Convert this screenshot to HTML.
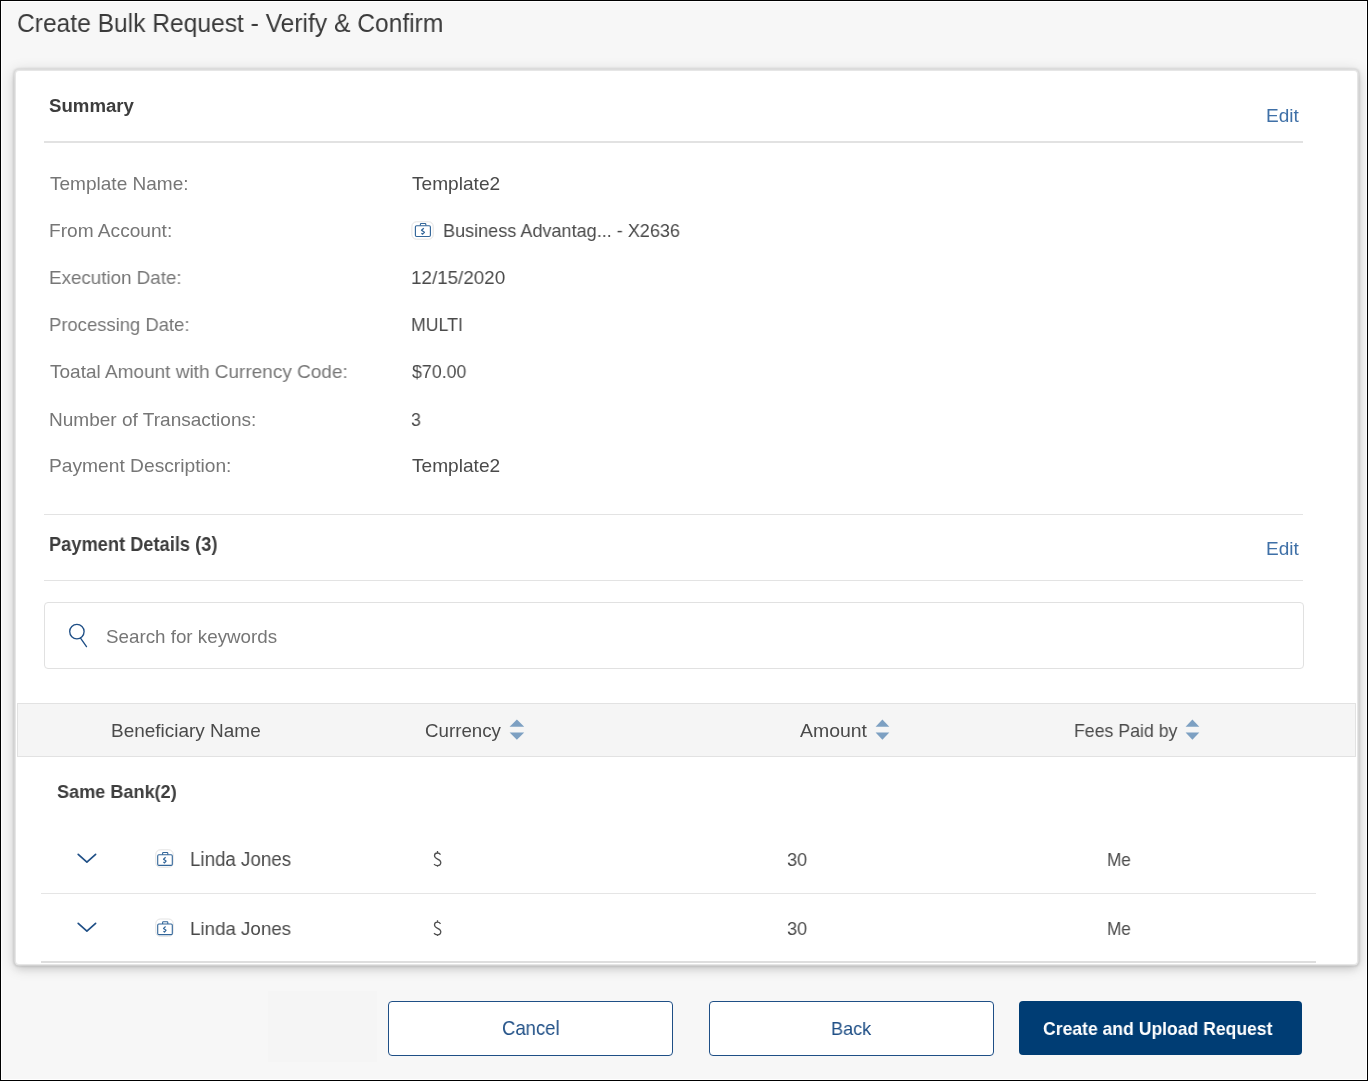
<!DOCTYPE html>
<html><head><meta charset="utf-8"><title>Create Bulk Request - Verify &amp; Confirm</title>
<style>
html,body{margin:0;padding:0}
body{width:1368px;height:1081px;position:relative;overflow:hidden;background:#000;font-family:"Liberation Sans",sans-serif}
.a{position:absolute;box-sizing:border-box}
.t{position:absolute;white-space:nowrap;line-height:1;font-family:"Liberation Sans",sans-serif;transform-origin:0 0;will-change:transform}
#frame{left:1px;top:1px;width:1366px;height:1079px;background:#fff}
#page{left:2px;top:2px;width:1364px;height:1077px;background:#f7f7f7}
#card{left:16px;top:71px;width:1341px;height:893px;background:#fff;border-radius:3px;box-shadow:0 0 0 1.5px #e6e6e6,0 0 2px 2.5px rgba(0,0,0,.09),0 2px 14px 3px rgba(0,0,0,.12),0 4px 8px rgba(0,0,0,.12)}
.hr{position:absolute;background:#e3e3e3}
#search{left:44px;top:602px;width:1260px;height:67px;border:1px solid #e1e1e1;border-radius:4px;background:#fff}
#thead{left:17px;top:703px;width:1339px;height:54px;background:#f5f5f5;border:1px solid #e2e2e2}
.btn{position:absolute;box-sizing:border-box;border-radius:4px}
#bcancel{left:388px;top:1001px;width:285px;height:55px;border:1.5px solid #1f4f86;background:#fff}
#bback{left:709px;top:1001px;width:285px;height:55px;border:1.5px solid #1f4f86;background:#fff}
#bcreate{left:1019px;top:1001px;width:283px;height:54px;background:#003d74}
svg{position:absolute;overflow:visible}
</style></head><body>
<div class="a" id="frame"></div>
<div class="a" id="page"></div>
<div class="a" id="card"></div>
<div class="hr" style="left:44px;top:141px;width:1259px;height:2px;background:#e2e2e2"></div>
<div class="hr" style="left:44px;top:514px;width:1259px;height:1px"></div>
<div class="hr" style="left:44px;top:580px;width:1259px;height:1px"></div>
<div class="a" id="search"></div>
<div class="a" id="thead"></div>
<div class="hr" style="left:41px;top:893px;width:1275px;height:1px;background:#e5e5e5"></div>
<div class="hr" style="left:41px;top:961px;width:1275px;height:2px;background:#dedede"></div>
<div class="a" style="left:268px;top:991px;width:109px;height:71px;background:#f5f5f5"></div>
<div class="btn" id="bcancel"></div>
<div class="btn" id="bback"></div>
<div class="btn" id="bcreate"></div>

<!-- search icon -->
<svg style="left:0;top:0" width="1" height="1"><g fill="none" stroke="#1f4f86" stroke-width="1.35"><circle cx="76.9" cy="631.6" r="7.2"/><line x1="80.7" y1="638.3" x2="86.5" y2="646.6" stroke-linecap="round"/></g></svg>

<!-- summary account icon -->
<svg style="left:0;top:0" width="1" height="1">
<rect x="411.9" y="221.8" width="21.3" height="17.4" rx="4.5" fill="#fff" stroke="#e3e3e3" stroke-width="1"/>
<g fill="none" stroke="#336699" stroke-width="1.15">
<rect x="415.4" y="225.7" width="15" height="10.8" rx="1.2"/>
<path d="M420.4 225.6 V224.2 Q420.4 223.5 421.1 223.5 H425.1 Q425.8 223.5 425.8 224.2 V225.6"/>
<path d="M423.8 228.2 L421.5 230.3 L424.4 232.3 L422.6 234.1 L421.4 233.3" stroke-width="1.3" stroke-linejoin="round"/>
</g></svg>

<!-- sort icons -->
<svg style="left:0;top:0" width="1" height="1"><g fill="#7da0c2">
<path d="M516.9 719.6 L524.2 726.8 H509.6 Z"/><path d="M509.6 732.4 H524.2 L516.9 739.8 Z"/>
<path d="M882.4 719.6 L889.3 726.8 H875.6 Z"/><path d="M875.6 732.4 H889.3 L882.4 739.8 Z"/>
<path d="M1192.4 719.6 L1199.3 726.8 H1185.6 Z"/><path d="M1185.6 732.4 H1199.3 L1192.4 739.8 Z"/>
</g></svg>

<!-- chevrons -->
<svg style="left:0;top:0" width="1" height="1"><g fill="none" stroke="#1f4f86" stroke-width="1.7" stroke-linecap="round" stroke-linejoin="round">
<path d="M78.2 854.4 L86.9 862.2 L95.6 854.4"/>
<path d="M78.2 923.4 L86.9 931.2 L95.6 923.4"/>
</g></svg>

<!-- row icons -->
<svg style="left:0;top:0" width="1" height="1">
<g id="ri1">
<rect x="155.8" y="849.8" width="17.4" height="17.4" rx="4.5" fill="#fff" stroke="#e3e3e3" stroke-width="1"/>
<g fill="none" stroke="#336699" stroke-width="1.1">
<rect x="157.7" y="854.8" width="14.6" height="10.6" rx="1.2"/>
<path d="M162.6 854.7 V853.2 Q162.6 852.5 163.3 852.5 H167.1 Q167.8 852.5 167.8 853.2 V854.7"/>
<path d="M165.6 857.3 L163.5 859.2 L166.1 861.0 L164.5 862.9 L163.4 862.1" stroke-width="1.2" stroke-linejoin="round"/>
</g></g>
<g transform="translate(0,69.2)">
<rect x="155.8" y="849.8" width="17.4" height="17.4" rx="4.5" fill="#fff" stroke="#e3e3e3" stroke-width="1"/>
<g fill="none" stroke="#336699" stroke-width="1.1">
<rect x="157.7" y="854.8" width="14.6" height="10.6" rx="1.2"/>
<path d="M162.6 854.7 V853.2 Q162.6 852.5 163.3 852.5 H167.1 Q167.8 852.5 167.8 853.2 V854.7"/>
<path d="M165.6 857.3 L163.5 859.2 L166.1 861.0 L164.5 862.9 L163.4 862.1" stroke-width="1.2" stroke-linejoin="round"/>
</g></g>
</svg>

<!-- currency glyphs -->
<svg style="left:0;top:0" width="1" height="1"><g fill="none" stroke="#4f4f4f" stroke-width="1.3" stroke-linecap="butt">
<path id="dl" d="M440.5 854.6 C439.8 853.5 438.7 853 437.5 853 C435.7 853 434.5 854.2 434.5 855.8 C434.5 857.5 435.9 858.3 437.6 859.1 C439.4 859.9 440.8 860.8 440.8 862.6 C440.8 864.4 439.4 865.6 437.4 865.6 C436 865.6 434.8 865 434 864.1 M437.5 851.1 V853 M437.5 865.6 V866.8"/>
<use href="#dl" transform="translate(0,69.2)"/>
</g></svg>
<div class="t" id="title" style="left:17.10px;top:10.00px;font-size:26.45px;font-weight:400;color:#3a3a3a;transform:scaleX(0.9298)">Create Bulk Request - Verify &amp; Confirm<span class="bm" style="display:inline-block;width:0;height:0;vertical-align:baseline"></span></div>
<div class="t" id="summary" style="left:49.09px;top:96.81px;font-size:18.46px;font-weight:700;color:#3d3d3d;transform:scaleX(1.0107)">Summary<span class="bm" style="display:inline-block;width:0;height:0;vertical-align:baseline"></span></div>
<div class="t" id="edit1" style="left:1266.07px;top:105.91px;font-size:19.04px;font-weight:400;color:#3f70a7;transform:scaleX(0.9914)">Edit<span class="bm" style="display:inline-block;width:0;height:0;vertical-align:baseline"></span></div>
<div class="t" id="l1" style="left:49.99px;top:174.00px;font-size:19.04px;font-weight:400;color:#767676;transform:scaleX(0.9979)">Template Name:<span class="bm" style="display:inline-block;width:0;height:0;vertical-align:baseline"></span></div>
<div class="t" id="l2" style="left:49.09px;top:221.00px;font-size:19.04px;font-weight:400;color:#767676;transform:scaleX(1.0043)">From Account:<span class="bm" style="display:inline-block;width:0;height:0;vertical-align:baseline"></span></div>
<div class="t" id="l3" style="left:49.09px;top:268.00px;font-size:19.04px;font-weight:400;color:#767676;transform:scaleX(0.9870)">Execution Date:<span class="bm" style="display:inline-block;width:0;height:0;vertical-align:baseline"></span></div>
<div class="t" id="l4" style="left:49.09px;top:315.00px;font-size:19.04px;font-weight:400;color:#767676;transform:scaleX(0.9690)">Processing Date:<span class="bm" style="display:inline-block;width:0;height:0;vertical-align:baseline"></span></div>
<div class="t" id="l5" style="left:49.99px;top:362.41px;font-size:19.04px;font-weight:400;color:#767676;transform:scaleX(0.9982)">Toatal Amount with Currency Code:<span class="bm" style="display:inline-block;width:0;height:0;vertical-align:baseline"></span></div>
<div class="t" id="l6" style="left:49.09px;top:409.61px;font-size:19.04px;font-weight:400;color:#767676;transform:scaleX(1.0000)">Number of Transactions:<span class="bm" style="display:inline-block;width:0;height:0;vertical-align:baseline"></span></div>
<div class="t" id="l7" style="left:49.09px;top:456.41px;font-size:19.04px;font-weight:400;color:#767676;transform:scaleX(1.0087)">Payment Description:<span class="bm" style="display:inline-block;width:0;height:0;vertical-align:baseline"></span></div>
<div class="t" id="v1" style="left:412.05px;top:174.00px;font-size:19.04px;font-weight:400;color:#4a4a4a;transform:scaleX(1.0037)">Template2<span class="bm" style="display:inline-block;width:0;height:0;vertical-align:baseline"></span></div>
<div class="t" id="v2" style="left:443.10px;top:221.00px;font-size:19.04px;font-weight:400;color:#4a4a4a;transform:scaleX(0.9492)">Business Advantag... - X2636<span class="bm" style="display:inline-block;width:0;height:0;vertical-align:baseline"></span></div>
<div class="t" id="v3" style="left:411.15px;top:268.00px;font-size:19.04px;font-weight:400;color:#4a4a4a;transform:scaleX(0.9887)">12/15/2020<span class="bm" style="display:inline-block;width:0;height:0;vertical-align:baseline"></span></div>
<div class="t" id="v4" style="left:411.15px;top:315.00px;font-size:19.04px;font-weight:400;color:#4a4a4a;transform:scaleX(0.9325)">MULTI<span class="bm" style="display:inline-block;width:0;height:0;vertical-align:baseline"></span></div>
<div class="t" id="v5" style="left:412.05px;top:362.41px;font-size:19.04px;font-weight:400;color:#4a4a4a;transform:scaleX(0.9354)">$70.00<span class="bm" style="display:inline-block;width:0;height:0;vertical-align:baseline"></span></div>
<div class="t" id="v6" style="left:411.15px;top:409.61px;font-size:19.04px;font-weight:400;color:#4a4a4a;transform:scaleX(0.9329)">3<span class="bm" style="display:inline-block;width:0;height:0;vertical-align:baseline"></span></div>
<div class="t" id="v7" style="left:412.05px;top:456.41px;font-size:19.04px;font-weight:400;color:#4a4a4a;transform:scaleX(1.0037)">Template2<span class="bm" style="display:inline-block;width:0;height:0;vertical-align:baseline"></span></div>
<div class="t" id="pd" style="left:49.07px;top:535.21px;font-size:19.62px;font-weight:700;color:#3d3d3d;transform:scaleX(0.9308)">Payment Details (3)<span class="bm" style="display:inline-block;width:0;height:0;vertical-align:baseline"></span></div>
<div class="t" id="edit2" style="left:1266.07px;top:538.91px;font-size:19.04px;font-weight:400;color:#3f70a7;transform:scaleX(0.9914)">Edit<span class="bm" style="display:inline-block;width:0;height:0;vertical-align:baseline"></span></div>
<div class="t" id="ph" style="left:106.07px;top:628.00px;font-size:18.60px;font-weight:400;color:#767676;transform:scaleX(1.0095)">Search for keywords<span class="bm" style="display:inline-block;width:0;height:0;vertical-align:baseline"></span></div>
<div class="t" id="h1" style="left:111.11px;top:722.80px;font-size:17.88px;font-weight:400;color:#4a4a4a;transform:scaleX(1.0620)">Beneficiary Name<span class="bm" style="display:inline-block;width:0;height:0;vertical-align:baseline"></span></div>
<div class="t" id="h2" style="left:425.16px;top:721.80px;font-size:18.60px;font-weight:400;color:#4a4a4a;transform:scaleX(1.0071)">Currency<span class="bm" style="display:inline-block;width:0;height:0;vertical-align:baseline"></span></div>
<div class="t" id="h3" style="left:800.01px;top:721.80px;font-size:18.60px;font-weight:400;color:#4a4a4a;transform:scaleX(1.0456)">Amount<span class="bm" style="display:inline-block;width:0;height:0;vertical-align:baseline"></span></div>
<div class="t" id="h4" style="left:1074.09px;top:721.80px;font-size:18.60px;font-weight:400;color:#4a4a4a;transform:scaleX(0.9522)">Fees Paid by<span class="bm" style="display:inline-block;width:0;height:0;vertical-align:baseline"></span></div>
<div class="t" id="same" style="left:57.16px;top:782.90px;font-size:18.75px;font-weight:700;color:#3d3d3d;transform:scaleX(0.9654)">Same Bank(2)<span class="bm" style="display:inline-block;width:0;height:0;vertical-align:baseline"></span></div>
<div class="t" id="n1" style="left:190.07px;top:850.11px;font-size:19.77px;font-weight:400;color:#4a4a4a;transform:scaleX(0.9480)">Linda Jones<span class="bm" style="display:inline-block;width:0;height:0;vertical-align:baseline"></span></div>
<div class="t" id="a1" style="left:787.14px;top:850.11px;font-size:19.04px;font-weight:400;color:#4a4a4a;transform:scaleX(0.9562)">30<span class="bm" style="display:inline-block;width:0;height:0;vertical-align:baseline"></span></div>
<div class="t" id="f1" style="left:1107.15px;top:850.11px;font-size:19.04px;font-weight:400;color:#4a4a4a;transform:scaleX(0.9025)">Me<span class="bm" style="display:inline-block;width:0;height:0;vertical-align:baseline"></span></div>
<div class="t" id="n2" style="left:190.07px;top:919.30px;font-size:19.04px;font-weight:400;color:#4a4a4a;transform:scaleX(0.9851)">Linda Jones<span class="bm" style="display:inline-block;width:0;height:0;vertical-align:baseline"></span></div>
<div class="t" id="a2" style="left:787.14px;top:919.30px;font-size:19.04px;font-weight:400;color:#4a4a4a;transform:scaleX(0.9562)">30<span class="bm" style="display:inline-block;width:0;height:0;vertical-align:baseline"></span></div>
<div class="t" id="f2" style="left:1107.15px;top:919.30px;font-size:19.04px;font-weight:400;color:#4a4a4a;transform:scaleX(0.9025)">Me<span class="bm" style="display:inline-block;width:0;height:0;vertical-align:baseline"></span></div>
<div class="t" id="b1" style="left:502.08px;top:1019.10px;font-size:19.62px;font-weight:400;color:#1f4f86;transform:scaleX(0.9427)">Cancel<span class="bm" style="display:inline-block;width:0;height:0;vertical-align:baseline"></span></div>
<div class="t" id="b2" style="left:831.12px;top:1019.11px;font-size:19.04px;font-weight:400;color:#1f4f86;transform:scaleX(0.9506)">Back<span class="bm" style="display:inline-block;width:0;height:0;vertical-align:baseline"></span></div>
<div class="t" id="b3" style="left:1043.16px;top:1019.11px;font-size:19.04px;font-weight:700;color:#ffffff;transform:scaleX(0.9232)">Create and Upload Request<span class="bm" style="display:inline-block;width:0;height:0;vertical-align:baseline"></span></div>
</body></html>
